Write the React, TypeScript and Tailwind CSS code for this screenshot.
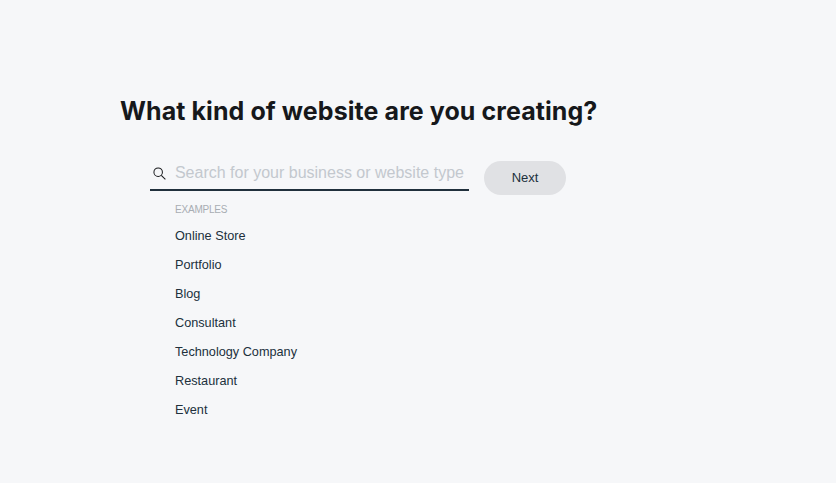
const examples = ["Online Store", "Portfolio", "Blog", "Consultant", "Technology Company", "Restaurant", "Event"];

export default function App() {
  return (
    <div className="min-h-screen bg-[#f6f7f9] pl-[121px] pt-[94px] font-['Liberation_Sans',sans-serif]">
      <h1 className="-ml-[1px] font-['Inter',sans-serif] text-[25px] font-bold leading-[34px] tracking-[0.08px] text-[#16181b]">
        What kind of website are you creating?
      </h1>

      <div className="ml-[29px] mt-[33px] flex items-start gap-[15px]">
        <div className="w-[319px]">
          <div className="flex h-[30px] items-center border-b-2 border-[#20303c] pb-[4px]">
            <svg viewBox="0 0 14 14" className="ml-[3px] h-[13px] w-[13px]" fill="none" stroke="#16181b" strokeWidth="1.1">
              <circle cx="5.6" cy="5.6" r="4.6" />
              <path d="M9 9l4.4 4.4" />
            </svg>
            <input
              placeholder="Search for your business or website type"
              className="ml-[9px] w-[296px] bg-transparent text-[16px] outline-none placeholder:text-[#c3c8ce]"
            />
          </div>
          <div className="ml-[25px] mt-[13px] text-[10px] leading-[12px] tracking-[-0.2px] text-[#a8adb3]">EXAMPLES</div>
          <ul className="ml-[25px] mt-[6px]">
            {examples.map((item) => (
              <li key={item} className="flex h-[29px] items-center text-[12.7px] text-[#20303c]">
                {item}
              </li>
            ))}
          </ul>
        </div>
        <button className="h-[34px] w-[82px] rounded-full bg-[#e0e1e4] text-[13px] text-[#20303c]">Next</button>
      </div>
    </div>
  );
}
